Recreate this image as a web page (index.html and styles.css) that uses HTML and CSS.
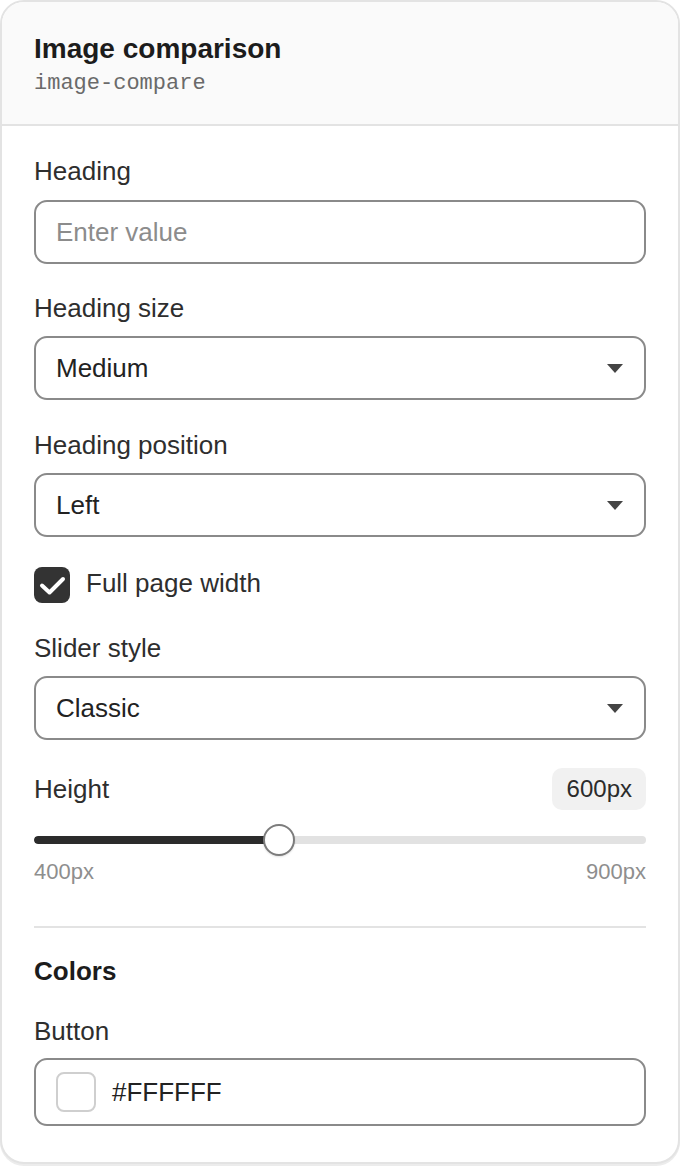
FILE: index.html
```html
<!DOCTYPE html>
<html>
<head>
<meta charset="utf-8">
<link rel="stylesheet" href="styles.css">
</head>
<body>
<div class="card">
  <div class="header">
    <div class="title">Image comparison</div>
    <div class="sub">image-compare</div>
  </div>
  <div class="body">
    <div class="field first">
      <div class="label">Heading</div>
      <div class="input placeholder">Enter value</div>
    </div>
    <div class="field">
      <div class="label">Heading size</div>
      <div class="input select"><span>Medium</span><span class="arrow"></span></div>
    </div>
    <div class="field">
      <div class="label">Heading position</div>
      <div class="input select"><span>Left</span><span class="arrow"></span></div>
    </div>
    <div class="field check-row">
      <span class="checkbox"><svg width="36" height="36" viewBox="0 0 36 36"><path d="M8 18.5 L15.5 25.5 L29 12" fill="none" stroke="#fff" stroke-width="4" stroke-linecap="round" stroke-linejoin="round"/></svg></span>
      <span class="check-label">Full page width</span>
    </div>
    <div class="field">
      <div class="label">Slider style</div>
      <div class="input select"><span>Classic</span><span class="arrow"></span></div>
    </div>
    <div class="range-field">
      <div class="range-head">
        <span class="label">Height</span>
        <span class="badge">600px</span>
      </div>
      <div class="slider">
        <div class="track"><div class="fill" style="width:40%"></div></div>
        <div class="thumb" style="left:40%"></div>
      </div>
      <div class="range-limits"><span>400px</span><span>900px</span></div>
    </div>
    <div class="divider"></div>
    <div class="section-title">Colors</div>
    <div class="field last">
      <div class="label">Button</div>
      <div class="input color"><span class="swatch"></span><span>#FFFFFF</span></div>
    </div>
  </div>
</div>
</body>
</html>
```
FILE: styles.css
```css
* { box-sizing: border-box; }
html, body { margin: 0; padding: 0; background: #ffffff; }
body {
  font-family: "Liberation Sans", Arial, sans-serif;
  color: #2b2b2b;
  width: 680px;
  height: 1166px;
}
.card {
  width: 680px;
  height: 1164px;
  border: 2px solid #e3e3e3;
  border-radius: 24px;
  overflow: hidden;
  background: #fff;
  box-shadow: 0 2px 0 #ececec;
}
.header {
  background: #fafafa;
  border-bottom: 2px solid #e3e3e3;
  padding: 30px 32px 27px 32px;
}
.title {
  font-size: 28px;
  line-height: 34px;
  font-weight: bold;
  color: #1c1c1c;
}
.sub {
  margin-top: 5px;
  font-family: "Liberation Mono", "Courier New", monospace;
  font-size: 22px;
  line-height: 26px;
  color: #6a6a6a;
}
.body {
  padding: 30px 32px 0 32px;
}
.field { margin-bottom: 30px; }
.label {
  font-size: 26px;
  line-height: 30px;
  color: #2e2e2e;
  display: block;
  margin-bottom: 13px;
}
.first .label { margin-bottom: 14px; }
.first { margin-bottom: 29px; }
.input {
  height: 64px;
  border: 2px solid #8a8a8a;
  border-radius: 13px;
  padding: 0 20px;
  display: flex;
  align-items: center;
  font-size: 26px;
  color: #222;
}
.placeholder { color: #8c8c8c; }
.select { justify-content: space-between; }
.arrow {
  width: 0;
  height: 0;
  border-left: 8px solid transparent;
  border-right: 8px solid transparent;
  border-top: 9px solid #444;
  margin-right: 1px;
}
.check-row {
  display: flex;
  align-items: center;
  gap: 16px;
  height: 36px;
}
.checkbox {
  width: 36px;
  height: 36px;
  border-radius: 8px;
  background: #333;
  display: block;
}
.checkbox svg { display: block; }
.check-label {
  font-size: 26px;
  line-height: 30px;
  color: #2e2e2e;
  margin-top: -5px;
}
.range-field { margin-top: -2px; }
.range-head {
  display: flex;
  justify-content: space-between;
  align-items: center;
  height: 42px;
}
.range-head .label { margin-bottom: 0; }
.badge {
  background: #f1f1f1;
  border-radius: 10px;
  height: 42px;
  padding: 0 14px 0 15px;
  display: flex;
  align-items: center;
  font-size: 24px;
  color: #2b2b2b;
}
.slider {
  position: relative;
  height: 32px;
  margin-top: 14px;
  display: flex;
  align-items: center;
}
.track {
  width: 100%;
  height: 8px;
  border-radius: 4px;
  background: #e2e2e2;
  overflow: hidden;
}
.fill {
  height: 100%;
  background: #2b2b2b;
  border-radius: 4px 0 0 4px;
}
.thumb {
  position: absolute;
  top: 0;
  width: 32px;
  height: 32px;
  margin-left: -16px;
  border-radius: 50%;
  background: #fff;
  border: 2px solid #7c7c7c;
  box-shadow: 0 1px 2px rgba(0,0,0,0.12);
}
.range-limits {
  display: flex;
  justify-content: space-between;
  margin-top: 3px;
  font-size: 22px;
  line-height: 26px;
  color: #8e8e8e;
}
.divider {
  height: 2px;
  background: #e3e3e3;
  margin-top: 41px;
}
.section-title {
  margin-top: 28px;
  font-size: 26px;
  line-height: 30px;
  font-weight: bold;
  color: #1c1c1c;
  margin-bottom: 30px;
}
.last { margin-bottom: 0; }
.last .label { margin-bottom: 12px; }
.color {
  height: 68px;
  gap: 16px;
}
.swatch {
  width: 40px;
  height: 40px;
  border: 2px solid #cfcfcf;
  border-radius: 8px;
  background: #fff;
  display: block;
}
```
